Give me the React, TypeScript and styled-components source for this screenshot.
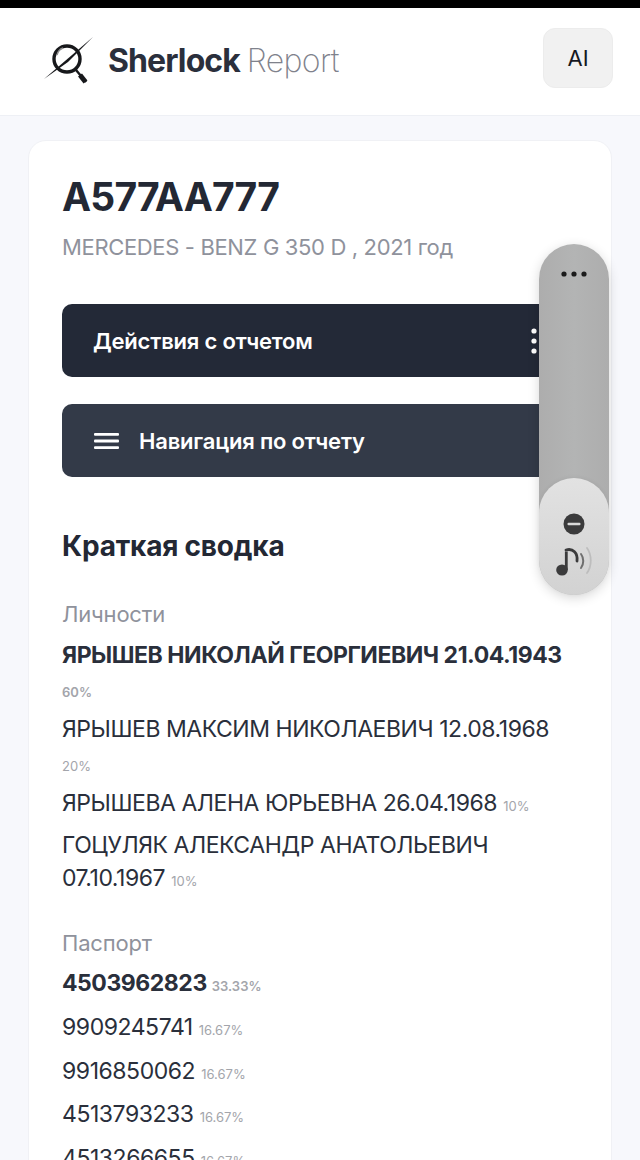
import React from "react";
import styled, { createGlobalStyle } from "styled-components";

const GlobalStyle = createGlobalStyle`
  html, body {
    margin: 0;
    height: 1160px;
    overflow: hidden;
    background: #f7f8fc;
    font-family: Inter, "Noto Sans", sans-serif;
    color: #232834;
  }
  * { box-sizing: border-box; }
`;

const StatusStrip = styled.div`
  height: 8px;
  background: #000;
`;

const Header = styled.header`
  height: 108px;
  padding: 20px 27px 0 44px;
  display: flex;
  justify-content: space-between;
  align-items: flex-start;
  background: #fff;
  border-bottom: 1px solid #eef0f5;
`;

const Brand = styled.div`
  display: flex;
  align-items: center;
  gap: 14px;
  margin-top: 8px;
`;

const BrandName = styled.div`
  font-size: 32px;
  line-height: 50px;
  font-weight: 700;
  letter-spacing: -0.9px;
  color: #2a2f3c;
  span {
    font-weight: 200;
    color: #7f828c;
    letter-spacing: -0.6px;
  }
`;

const AiButton = styled.button`
  width: 70px;
  height: 60px;
  border: 1px solid #ececec;
  border-radius: 12px;
  background: #f1f1f1;
  font: 400 22px Inter, sans-serif;
  color: #15181f;
`;

const Page = styled.main`
  padding: 24px 28px 0;
`;

const Card = styled.section`
  padding: 30px 33px 40px;
  border: 1px solid #f0f1f5;
  border-radius: 18px;
  background: #fff;
`;

const Plate = styled.h1`
  margin: 0;
  font-size: 39px;
  line-height: 52px;
  font-weight: 700;
  letter-spacing: -0.8px;
  color: #232834;
`;

const Vehicle = styled.p`
  margin: 8px 0 0;
  font-size: 22px;
  line-height: 32px;
  font-weight: 400;
  letter-spacing: -0.35px;
  color: #8f929c;
`;

const ActionBar = styled.div<{ $tone: string; $offset: number }>`
  height: 73px;
  margin-top: ${(p) => p.$offset}px;
  padding: 0 40px 0 31px;
  display: flex;
  align-items: center;
  gap: 18px;
  border-radius: 10px;
  background: ${(p) => p.$tone};
  color: #fff;
  font-size: 22px;
  font-weight: 600;
  letter-spacing: -0.2px;
`;

const ActionLabel = styled.span`
  flex: 1;
`;

const SectionTitle = styled.h2`
  margin: 49px 0 0;
  font-size: 28px;
  line-height: 40px;
  font-weight: 700;
  letter-spacing: -0.2px;
`;

const GroupLabel = styled.div<{ $offset: number }>`
  margin-top: ${(p) => p.$offset}px;
  font-size: 22px;
  line-height: 32px;
  letter-spacing: -0.2px;
  color: #8f929c;
`;

const Entry = styled.div<{ $strong?: boolean; $gap: number }>`
  margin-top: ${(p) => p.$gap}px;
  font-size: 23px;
  line-height: 33px;
  letter-spacing: -0.45px;
  font-weight: ${(p) => (p.$strong ? 700 : 400)};
  color: #2a2f3b;
`;

const Share = styled.span<{ $block?: boolean; $strong?: boolean }>`
  display: ${(p) => (p.$block ? "block" : "inline")};
  ${(p) => (p.$block ? "margin-top: 4px;" : "")}
  font-size: 13px;
  letter-spacing: 0;
  font-weight: ${(p) => (p.$strong ? 600 : 400)};
  color: #a3a5ab;
`;

const SoundPill = styled.aside`
  position: absolute;
  left: 539px;
  top: 244px;
  width: 70px;
  height: 351px;
  padding-top: 27px;
  display: flex;
  flex-direction: column;
  align-items: center;
  border-radius: 35px;
  background: linear-gradient(90deg, #adadad, #b3b4b4 50%, #adadad);
  box-shadow: 0 3px 12px rgba(0, 0, 0, 0.16);
`;

const PillDots = styled.svg`
  display: block;
`;

const PillKnob = styled.div`
  margin-top: auto;
  width: 70px;
  height: 117px;
  padding-top: 35px;
  display: flex;
  flex-direction: column;
  align-items: center;
  gap: 10px;
  border-radius: 35px;
  background: linear-gradient(180deg, #e2e2e2, #d2d2d2);
  box-shadow: 0 -1px 4px rgba(0, 0, 0, 0.05);
`;

function BrandMark() {
  return (
    <svg width="50" height="50" viewBox="0 0 50 50" fill="none">
      <circle cx="23" cy="23" r="13" stroke="#17181b" strokeWidth="3.4" />
      <path d="M13 19c1-4 3-6 6-7" stroke="#8d8d8d" strokeWidth="1.4" />
      <path d="M0 43 L21 25 L49 1 L24 26 Z" fill="#17181b" />
      <path d="M32 34 L42 46" stroke="#17181b" strokeWidth="2.4" />
      <path d="M36 39 L41.5 46" stroke="#17181b" strokeWidth="5" />
    </svg>
  );
}

function Kebab() {
  return (
    <svg width="8" height="26" viewBox="0 0 8 26" fill="#fff">
      <circle cx="4" cy="3" r="2.6" />
      <circle cx="4" cy="13" r="2.6" />
      <circle cx="4" cy="23" r="2.6" />
    </svg>
  );
}

function Burger() {
  return (
    <svg width="28" height="16" viewBox="0 0 28 16" fill="#fff">
      <rect x="1" y="0" width="25" height="2.8" rx="1" />
      <rect x="1" y="6.6" width="25" height="2.8" rx="1" />
      <rect x="1" y="13.2" width="25" height="2.8" rx="1" />
    </svg>
  );
}

function MuteBadge() {
  return (
    <svg width="22" height="22" viewBox="0 0 22 22">
      <circle cx="11" cy="11" r="10.5" fill="#3b3b3c" />
      <rect x="4.5" y="9.8" width="13" height="2.4" rx="1" fill="#d9d9d9" />
    </svg>
  );
}

function NoteWaves() {
  return (
    <svg width="38" height="32" viewBox="0 0 38 32" fill="none">
      <ellipse cx="7" cy="25" rx="5.8" ry="5.6" fill="#3b3b3c" />
      <path d="M11.3 25V6.5" stroke="#3b3b3c" strokeWidth="2.8" />
      <path d="M11 5c7-2 12 3 11 11" stroke="#3b3b3c" strokeWidth="2.8" strokeLinecap="round" />
      <path d="M26 9c3 4 3 10 0 14" stroke="#6f6f6f" strokeWidth="2" strokeLinecap="round" />
      <path d="M32 3c5 7 5 18 0 25" stroke="#bdbdbd" strokeWidth="1.8" strokeLinecap="round" />
    </svg>
  );
}

export default function App() {
  return (
    <>
      <GlobalStyle />
      <StatusStrip />
      <Header>
        <Brand>
          <BrandMark />
          <BrandName>
            Sherlock <span>Report</span>
          </BrandName>
        </Brand>
        <AiButton>AI</AiButton>
      </Header>
      <Page>
        <Card>
          <Plate>A577AA777</Plate>
          <Vehicle>MERCEDES - BENZ G 350 D , 2021 год</Vehicle>

          <ActionBar $tone="#232937" $offset="41">
            <ActionLabel>Действия с отчетом</ActionLabel>
            <Kebab />
          </ActionBar>
          <ActionBar $tone="#333a48" $offset="27">
            <Burger />
            <ActionLabel>Навигация по отчету</ActionLabel>
          </ActionBar>

          <SectionTitle>Краткая сводка</SectionTitle>

          <GroupLabel $offset="32">Личности</GroupLabel>
          <Entry $strong $gap="9">
            ЯРЫШЕВ НИКОЛАЙ ГЕОРГИЕВИЧ 21.04.1943
            <Share $block $strong>60%</Share>
          </Entry>
          <Entry $gap="4">
            ЯРЫШЕВ МАКСИМ НИКОЛАЕВИЧ 12.08.1968
            <Share $block>20%</Share>
          </Entry>
          <Entry $gap="4">
            ЯРЫШЕВА АЛЕНА ЮРЬЕВНА 26.04.1968 <Share>10%</Share>
          </Entry>
          <Entry $gap="6">
            ГОЦУЛЯК АЛЕКСАНДР АНАТОЛЬЕВИЧ 07.10.1967 <Share>10%</Share>
          </Entry>

          <GroupLabel $offset="29">Паспорт</GroupLabel>
          <Entry $strong $gap="8">
            4503962823 <Share $strong>33.33%</Share>
          </Entry>
          <Entry $gap="8">
            9909245741 <Share>16.67%</Share>
          </Entry>
          <Entry $gap="8">
            9916850062 <Share>16.67%</Share>
          </Entry>
          <Entry $gap="7">
            4513793233 <Share>16.67%</Share>
          </Entry>
          <Entry $gap="8">
            4513266655 <Share>16.67%</Share>
          </Entry>
        </Card>
      </Page>
      <SoundPill>
        <PillDots width="28" height="6" viewBox="0 0 28 6" fill="#1b1b1b">
          <circle cx="4" cy="3" r="2.6" />
          <circle cx="14" cy="3" r="2.6" />
          <circle cx="24" cy="3" r="2.6" />
        </PillDots>
        <PillKnob>
          <MuteBadge />
          <NoteWaves />
        </PillKnob>
      </SoundPill>
    </>
  );
}
